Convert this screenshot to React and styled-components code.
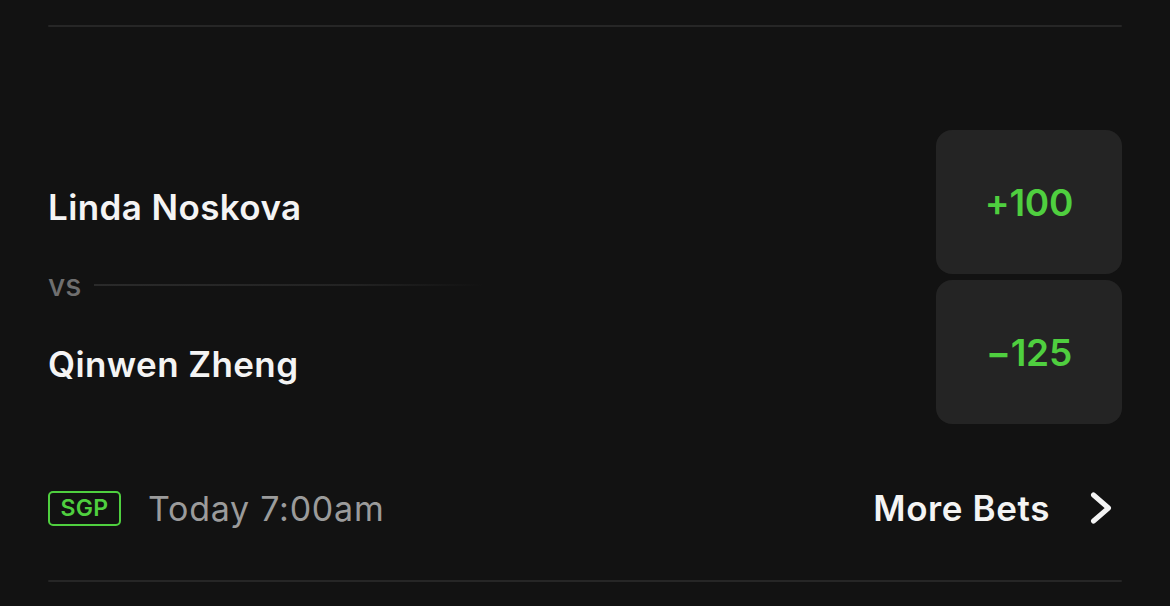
import React from "react";
import styled, { createGlobalStyle } from "styled-components";

const Global = createGlobalStyle`
  html, body {
    margin: 0;
    padding: 0;
    background: #121212;
  }
  body {
    font-family: Inter, "Noto Sans", sans-serif;
    -webkit-font-smoothing: antialiased;
  }
`;

const Page = styled.div`
  width: 1170px;
  height: 606px;
  box-sizing: border-box;
  padding: 25px 48px 0 48px;
  background: #121212;
  overflow: hidden;
`;

const Divider = styled.div`
  height: 2px;
  background: #262626;
  border-radius: 1px;
`;

const Matchup = styled.div`
  display: flex;
  justify-content: space-between;
  align-items: flex-start;
  margin-top: 103px;
`;

const Players = styled.div`
  display: flex;
  flex-direction: column;
  padding-top: 57px;
`;

const PlayerName = styled.div`
  color: #f4f4f4;
  font-size: 35px;
  font-weight: 600;
  letter-spacing: 0.4px;
  line-height: 40px;
`;

const VsRow = styled.div`
  display: flex;
  align-items: center;
  gap: 13px;
  height: 28px;
  margin: 44px 0 45px;
`;

const VsLabel = styled.span`
  color: #6f6f6f;
  font-size: 30px;
  font-weight: 500;
  line-height: 28px;
`;

const VsLine = styled.div`
  width: 390px;
  height: 2px;
  background: linear-gradient(to right, #2a2a2a 0%, #232323 65%, rgba(35, 35, 35, 0) 100%);
`;

const Odds = styled.div`
  display: flex;
  flex-direction: column;
  gap: 6px;
`;

const OddsButton = styled.div`
  width: 186px;
  height: 144px;
  background: #242424;
  border-radius: 16px;
  display: flex;
  align-items: center;
  justify-content: center;
  color: #4fcf3f;
  font-size: 37px;
  font-weight: 600;
  letter-spacing: -0.2px;
`;

const Footer = styled.div`
  display: flex;
  justify-content: space-between;
  align-items: center;
  height: 38px;
  margin: 65px 0 53px;
`;

const Meta = styled.div`
  display: flex;
  align-items: center;
  gap: 27px;
`;

const Badge = styled.span`
  box-sizing: border-box;
  height: 35px;
  width: 73px;
  border: 2.5px solid #4fcf3f;
  border-radius: 5px;
  color: #4fcf3f;
  font-size: 23px;
  font-weight: 600;
  letter-spacing: 0.4px;
  display: flex;
  align-items: center;
  justify-content: center;
`;

const Time = styled.span`
  color: #9b9b9b;
  font-size: 34px;
  font-weight: 400;
  letter-spacing: 0.75px;
`;

const MoreBets = styled.div`
  display: flex;
  align-items: center;
  gap: 39px;
  color: #f4f4f4;
  font-size: 35px;
  font-weight: 600;
  letter-spacing: 0.6px;
  padding-right: 9px;
`;

const Chevron = () => (
  <svg width="24" height="36" viewBox="0 0 24 36" fill="none">
    <path d="M4.5 5 L19.5 18 L4.5 31" stroke="#f4f4f4" strokeWidth="5" strokeLinecap="round" strokeLinejoin="round" />
  </svg>
);

export default function App() {
  return (
    <>
      <Global />
      <Page>
        <Divider />
        <Matchup>
          <Players>
            <PlayerName>Linda Noskova</PlayerName>
            <VsRow>
              <VsLabel>vs</VsLabel>
              <VsLine />
            </VsRow>
            <PlayerName>Qinwen Zheng</PlayerName>
          </Players>
          <Odds>
            <OddsButton>+100</OddsButton>
            <OddsButton>−125</OddsButton>
          </Odds>
        </Matchup>
        <Footer>
          <Meta>
            <Badge>SGP</Badge>
            <Time>Today 7:00am</Time>
          </Meta>
          <MoreBets>
            More Bets
            <Chevron />
          </MoreBets>
        </Footer>
        <Divider />
      </Page>
    </>
  );
}
